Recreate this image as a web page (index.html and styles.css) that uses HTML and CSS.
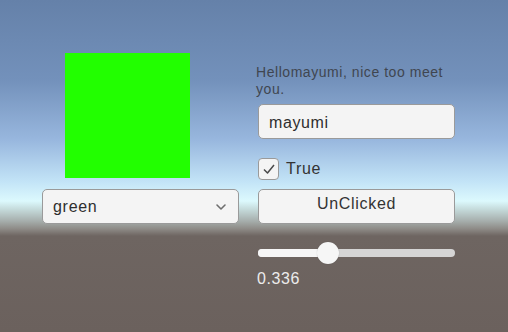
FILE: index.html
```html
<!DOCTYPE html>
<html lang="en">
<head>
  <meta charset="UTF-8">
  <title>UI Sample</title>
  <link rel="stylesheet" href="styles.css">
</head>
<body>
  <div class="scene">
    <div class="left-col">
      <div class="color-box"></div>
      <div class="dropdown">
        <span class="dropdown-label">green</span>
        <svg class="chevron" width="12" height="8" viewBox="0 0 12 8">
          <path d="M2 2L6 6L10 2" stroke="#6e6e6e" stroke-width="1.6" fill="none" stroke-linecap="round" stroke-linejoin="round"/>
        </svg>
      </div>
    </div>

    <div class="right-col">
      <p class="greeting">Hellomayumi, nice too meet you.</p>
      <div class="input-field">mayumi</div>
      <div class="toggle">
        <span class="check-box">
          <svg width="16" height="16" viewBox="0 0 16 16">
            <path d="M3 8.5L6.5 12L13 4" stroke="#4a4a4a" stroke-width="1.5" fill="none" stroke-linejoin="round"/>
          </svg>
        </span>
        <span class="toggle-label">True</span>
      </div>
      <button class="ui-button">UnClicked</button>
      <div class="slider">
        <div class="slider-area">
          <div class="slider-fill" style="width: 33.6%"></div>
          <div class="slider-handle" style="left: 33.6%"></div>
        </div>
      </div>
      <div class="slider-value">0.336</div>
    </div>
  </div>
</body>
</html>
```

FILE: styles.css
```css
html, body {
  margin: 0;
  height: 100%;
}
body {
  font-family: "Liberation Sans", Arial, sans-serif;
  background: linear-gradient(to bottom,
    #6581a9 0,
    #7391bb 80px,
    #98b7de 140px,
    #c3e4f7 182px,
    #dcf9fd 201px,
    #c3d8d8 210px,
    #a6aeac 221px,
    #8d8a86 229px,
    #6e6561 236px,
    #6b615d 100%);
  overflow: hidden;
}
.scene {
  display: flex;
  align-items: flex-start;
  gap: 19px;
  padding: 53px 0 0 42px;
}
.left-col {
  width: 197px;
  display: flex;
  flex-direction: column;
}
.color-box {
  width: 125px;
  height: 125px;
  margin-left: 23px;
  background: #22ff00;
}
.dropdown {
  margin-top: 11px;
  height: 35px;
  box-sizing: border-box;
  border: 1px solid #9a9a9a;
  border-radius: 5px;
  background: #f4f4f4;
  display: flex;
  align-items: center;
  justify-content: space-between;
  padding: 1px 11px 0 10px;
}
.dropdown-label {
  font-size: 16px;
  color: #2e2e2e;
  letter-spacing: 0.7px;
}
.right-col {
  width: 197px;
  display: flex;
  flex-direction: column;
}
.greeting {
  margin: 11px 0 0 -2px;
  font-size: 14px;
  line-height: 17px;
  color: #404650;
  letter-spacing: 0.55px;
}
.input-field {
  margin-top: 6px;
  height: 35px;
  box-sizing: border-box;
  border: 1px solid #9a9a9a;
  border-radius: 5px;
  background: #f4f4f4;
  padding: 2px 10px 0;
  display: flex;
  align-items: center;
  font-size: 16px;
  color: #2e2e2e;
  letter-spacing: 0.6px;
}
.toggle {
  margin-top: 19px;
  display: flex;
  align-items: center;
  gap: 7px;
}
.check-box {
  width: 21px;
  height: 22px;
  box-sizing: border-box;
  border: 1px solid #9a9a9a;
  border-radius: 4px;
  background: #f4f4f4;
  display: flex;
  align-items: center;
  justify-content: center;
}
.toggle-label {
  font-size: 16px;
  color: #333;
  letter-spacing: 0.7px;
}
.ui-button {
  margin-top: 9px;
  height: 35px;
  box-sizing: border-box;
  border: 1px solid #9a9a9a;
  border-radius: 5px;
  background: #f4f4f4;
  font-family: inherit;
  font-size: 16px;
  color: #333;
  letter-spacing: 0.7px;
  padding: 0 0 6px;
}
.slider {
  margin-top: 25px;
  height: 8px;
  border-radius: 4px;
  background: #d5d5d5;
}
.slider-area {
  position: relative;
  height: 100%;
  margin: 0 11px;
}
.slider-fill {
  height: 100%;
  margin-left: -11px;
  padding-left: 11px;
  border-radius: 4px 0 0 4px;
  background: #f6f6f6;
}
.slider-handle {
  position: absolute;
  top: -7px;
  width: 22px;
  height: 22px;
  margin-left: -11px;
  border-radius: 50%;
  background: #f6f6f6;
  box-shadow: 0 0 1px rgba(0, 0, 0, 0.3);
}
.slider-value {
  margin: 13px 0 0 -1px;
  font-size: 16px;
  color: #ececec;
  letter-spacing: 0.6px;
}
```
